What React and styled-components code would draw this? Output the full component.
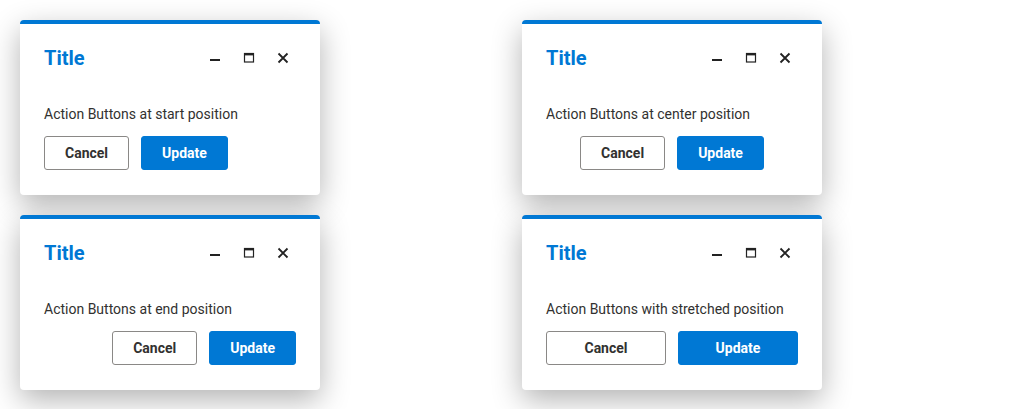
import styled, { createGlobalStyle } from "styled-components";

const GlobalStyle = createGlobalStyle`
    body {
        margin: 0;
        background: #ffffff;
        font-family: Roboto, "Liberation Sans", sans-serif;
    }
`

const dialogs = [
    { text: "Action Buttons at start position", align: "start" },
    { text: "Action Buttons at center position", align: "center" },
    { text: "Action Buttons at end position", align: "end" },
    { text: "Action Buttons with stretched position", align: "stretch" },
]

function Minimize() {
    return (
        <svg width="12" height="12" viewBox="0 0 12 12">
            <rect x="1" y="7" width="10" height="2" fill="#222" />
        </svg>
    )
}

function Maximize() {
    return (
        <svg width="12" height="12" viewBox="0 0 12 12">
            <rect x="1.5" y="1.5" width="9" height="8.5" fill="none" stroke="#222" strokeWidth="1.2" />
            <rect x="1" y="1" width="10" height="2.4" fill="#222" />
        </svg>
    )
}

function Close() {
    return (
        <svg width="12" height="12" viewBox="0 0 12 12">
            <path d="M1.5 1.5 L10.5 10.5 M10.5 1.5 L1.5 10.5" stroke="#222" strokeWidth="1.8" />
        </svg>
    )
}

function Dialog({ text, align }) {
    return (
        <Card>
            <Header>
                <Title>Title</Title>
                <Controls>
                    <IconButton><Minimize /></IconButton>
                    <IconButton><Maximize /></IconButton>
                    <IconButton><Close /></IconButton>
                </Controls>
            </Header>
            <Content>{text}</Content>
            <Actions align={align}>
                <Button>Cancel</Button>
                <Button primary>Update</Button>
            </Actions>
        </Card>
    )
}

export default function App() {
    return (
        <>
            <GlobalStyle />
            <Page>
                {dialogs.map(d => <Dialog key={d.align} text={d.text} align={d.align} />)}
            </Page>
        </>
    )
}

const Page = styled.div`
    display: grid;
    grid-template-columns: 502px 502px;
    row-gap: 20px;
    padding: 20px;
    align-items: start;
`

const Card = styled.div`
    width: 300px;
    box-sizing: border-box;
    background: #ffffff;
    border-top: 4px solid #0078d4;
    border-radius: 4px;
    padding: 0 24px 25px;
    box-shadow: 0 10px 30px rgba(0, 0, 0, 0.3);
`

const Header = styled.div`
    display: flex;
    align-items: center;
    justify-content: space-between;
    padding-top: 20px;
    height: 28px;
`

const Title = styled.h2`
    margin: 0;
    font-size: 20px;
    font-weight: 700;
    line-height: 28px;
    color: #0078d4;
`

const Controls = styled.div`
    display: flex;
    gap: 8px;
`

const IconButton = styled.div`
    width: 26px;
    height: 26px;
    display: flex;
    align-items: center;
    justify-content: center;
`

const Content = styled.p`
    margin: 32px 0 12px;
    font-size: 14px;
    line-height: 20px;
    color: #323130;
`

const justify = {
    start: "flex-start",
    center: "center",
    end: "flex-end",
    stretch: "stretch",
}

const Actions = styled.div`
    display: flex;
    gap: 12px;
    justify-content: ${props => justify[props.align]};

    & > * {
        flex: ${props => props.align === "stretch" ? "1 1 0" : "0 0 auto"};
    }
`

const Button = styled.button`
    height: 34px;
    min-width: 84px;
    padding: 0 20px;
    border-radius: 3px;
    font-family: Roboto, "Liberation Sans", sans-serif;
    font-size: 14px;
    font-weight: 700;
    border: 1px solid ${props => props.primary ? "#0078d4" : "#8a8886"};
    background: ${props => props.primary ? "#0078d4" : "#ffffff"};
    color: ${props => props.primary ? "#ffffff" : "#323130"};
`
